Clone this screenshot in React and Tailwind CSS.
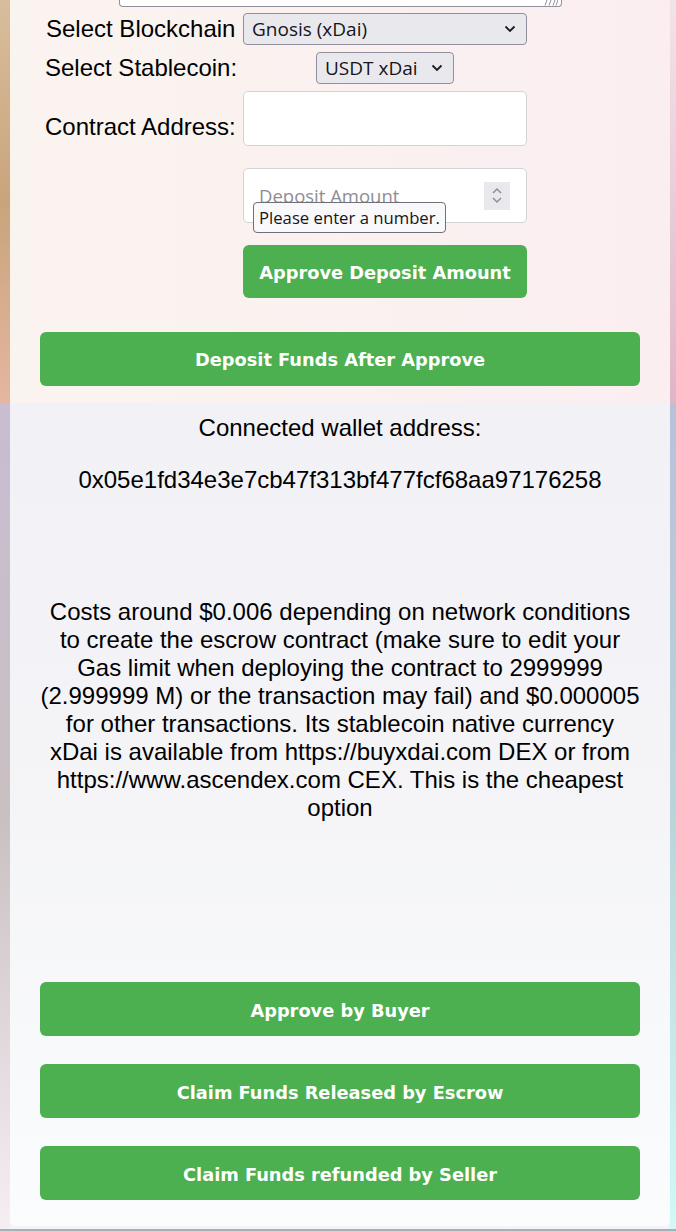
import React from "react";

const Chevron = ({ className }) => (
  <svg width="12" height="8" viewBox="0 0 12 8" className={className}>
    <polyline points="1.5,1.5 6,6 10.5,1.5" fill="none" stroke="#1b1b1b" strokeWidth="1.8" />
  </svg>
);

const GreenButton = ({ children, className }) => (
  <button className={"flex items-center justify-center rounded-[6px] bg-[#4caf50] pt-[3px] font-['DejaVu_Sans'] text-[17.8px] font-bold text-white " + className}>
    {children}
  </button>
);

export default function App() {
  return (
    <div className="w-[676px] font-['Liberation_Sans'] text-black">
      {/* top: escrow form */}
      <div className="flex h-[403px]">
        <div className="w-[10px] bg-gradient-to-b from-[#d9bd9c] via-[#c8a47c] to-[#e6b6a0]" />
        <div className="relative flex flex-1 flex-col bg-gradient-to-r from-[#faf4ef] to-[#fbeef1]">
          <div className="relative ml-[109px] h-[7px] w-[443px] rounded-b-[4px] border border-t-0 border-[#8f8f9d] bg-white">
            <svg width="14" height="6" viewBox="0 0 14 6" className="absolute right-[3px] top-0">
              <path d="M1 5.5 L3 0 M5 5.5 L7 0 M9 5.5 L11 0 M12 5.5 L14 0" stroke="#8f8f9d" strokeWidth="1" />
            </svg>
          </div>

          <div className="mt-[6px] flex h-[32px] items-center">
            <div className="w-[233px] pl-[36px] text-[24px] leading-[28px]">Select Blockchain</div>
            <div className="flex h-[32px] w-[284px] items-center justify-between rounded-[4px] border border-[#8f8f9d] bg-[#e9e9ed] pl-[8px] pr-[10px] font-['Open_Sans'] text-[19px] text-[#15141a]">
              <span>Gnosis (xDai)</span>
              <Chevron />
            </div>
          </div>

          <div className="mt-[7px] flex h-[32px] items-center">
            <div className="w-[233px] pl-[35px] text-[24px] leading-[28px]">Select Stablecoin:</div>
            <div className="flex w-[284px] justify-center">
              <div className="flex h-[32px] w-[138px] items-center justify-between rounded-[4px] border border-[#8f8f9d] bg-[#e9e9ed] pl-[8px] pr-[10px] font-['Open_Sans'] text-[19px] text-[#15141a]">
                <span>USDT xDai</span>
                <Chevron />
              </div>
            </div>
          </div>

          <div className="mt-[7px] flex h-[55px] items-center">
            <div className="w-[233px] pl-[35px] pt-[16px] text-[24px] leading-[28px]">Contract Address:</div>
            <div className="h-[55px] w-[284px] rounded-[5px] border border-[#d3d3d6] bg-white" />
          </div>

          <div className="mt-[22px] flex h-[55px]">
            <div className="w-[233px]" />
            <div className="relative flex h-[55px] w-[284px] items-center justify-between rounded-[5px] border border-[#d3d3d6] bg-white pl-[15px] pr-[16px]">
              <span className="font-['Open_Sans'] text-[18.5px] text-[#8d8d93]">Deposit Amount</span>
              <div className="flex h-[28px] w-[26px] flex-col items-center justify-center gap-[3px] bg-[#e9e9ed]">
                <svg width="12" height="7" viewBox="0 0 12 7">
                  <polyline points="2,6 6,2 10,6" fill="none" stroke="#8e8e96" strokeWidth="1.5" />
                </svg>
                <svg width="12" height="7" viewBox="0 0 12 7">
                  <polyline points="2,1 6,5 10,1" fill="none" stroke="#8e8e96" strokeWidth="1.5" />
                </svg>
              </div>
              <div className="absolute left-[9px] top-[33px] flex h-[31px] items-center rounded-[4px] border border-[#6f6f75] bg-[#f9f9fb] px-[5px] font-['Open_Sans'] text-[16.7px] text-[#15141a]">
                Please enter a number.
              </div>
            </div>
          </div>

          <div className="mt-[22px] flex">
            <div className="w-[233px]" />
            <GreenButton className="h-[53px] w-[284px]">Approve Deposit Amount</GreenButton>
          </div>

          <GreenButton className="mx-[30px] mt-[34px] h-[54px]">Deposit Funds After Approve</GreenButton>
        </div>
        <div className="w-[6px] bg-gradient-to-b from-[#f3e3e8] to-[#dfb5c8]" />
      </div>

      {/* bottom: wallet info and actions */}
      <div className="flex">
        <div className="w-[10px] bg-gradient-to-b from-[#c8bdd2] via-[#c9c0c2] to-[#f6eef3]" />
        <div className="flex flex-1 flex-col bg-[#f6f2f6]">
          <div className="flex h-[823px] flex-col items-center rounded-b-[6px] bg-gradient-to-b from-[#f1f1f6] via-[#f5f5f8] to-[#fafcfd] pt-[11px] text-[24px] leading-[28px]">
            <p>Connected wallet address:</p>
            <p className="mt-[24px]">0x05e1fd34e3e7cb47f313bf477fcf68aa97176258</p>
            <p className="mt-[104px] w-[602px] text-center">
              Costs around $0.006 depending on network conditions to create the escrow contract (make sure to edit your Gas limit when deploying the contract to 2999999 (2.999999 M) or the transaction may fail) and $0.000005 for other transactions. Its stablecoin native currency xDai is available from https://buyxdai.com DEX or from https://www.ascendex.com CEX. This is the cheapest option
            </p>
            <div className="mt-[160px] flex w-[600px] flex-col gap-[28px]">
              <GreenButton className="h-[54px]">Approve by Buyer</GreenButton>
              <GreenButton className="h-[54px]">Claim Funds Released by Escrow</GreenButton>
              <GreenButton className="h-[54px]">Claim Funds refunded by Seller</GreenButton>
            </div>
          </div>
          <div className="h-[3px]" />
        </div>
        <div className="w-[6px] bg-gradient-to-b from-[#b9c1d9] via-[#bad4da] to-[#d2f8f8]" />
      </div>
      <div className="h-[2px] bg-[#a7afb7]" />
    </div>
  );
}
